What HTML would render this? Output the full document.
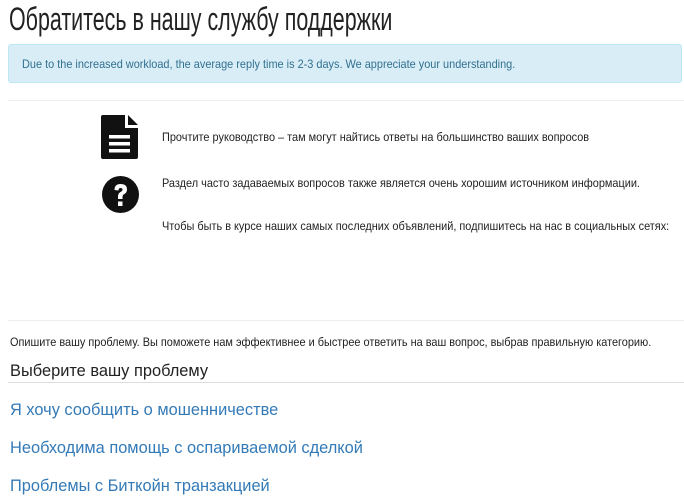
<!DOCTYPE html>
<html><head><meta charset="utf-8"><style>
body{margin:0;width:684px;height:500px;overflow:hidden;background:#fff;font-family:"Liberation Sans",sans-serif;color:#333;position:relative}
.a{position:absolute;white-space:nowrap;transform-origin:0 0}
</style></head><body>
<div class="a" style="left:9px;top:1px;font-size:32px;color:#222;transform:scaleX(0.67)">Обратитесь в нашу службу поддержки</div>
<div class="a" style="left:8px;top:44px;width:674px;height:39px;background:#d9edf7;border:1px solid #bce8f1;border-radius:3px;box-sizing:border-box"></div>
<div class="a" style="left:22px;top:57px;font-size:12px;color:#31708f;transform:scaleX(0.91)">Due to the increased workload, the average reply time is 2-3 days. We appreciate your understanding.</div>
<div class="a" style="left:8px;top:100px;width:676px;height:1px;background:#eee"></div>
<svg class="a" style="left:101px;top:115px" width="38" height="44" viewBox="0 0 38 44"><path d="M2 0H24V13H37V42Q37 44 35 44H2Q0 44 0 42V2Q0 0 2 0Z" fill="#111"/><path d="M27 0L37 10H27Z" fill="#111"/><rect x="8" y="20" width="21" height="3.5" fill="#fff"/><rect x="8" y="27" width="21" height="3.5" fill="#fff"/><rect x="8" y="34" width="21" height="3.5" fill="#fff"/></svg>
<svg class="a" style="left:102px;top:176px" width="37" height="37" viewBox="0 0 37 37"><circle cx="18.5" cy="18.5" r="18.5" fill="#111"/><path d="M12.5 14Q12.5 8 18.5 8Q25 8 25 13.5Q25 17 21.5 18.5Q20.5 19.2 20.5 21V23H16V20.5Q16 17 19 15.7Q20.5 15 20.5 13.5Q20.5 12 18.5 12Q16.5 12 16.5 14.5Z" fill="#fff"/><rect x="16" y="25.5" width="4.5" height="4.5" fill="#fff"/></svg>
<div class="a" style="left:162px;top:130px;font-size:12px;color:#222;transform:scaleX(0.91)">Прочтите руководство – там могут найтись ответы на большинство ваших вопросов</div>
<div class="a" style="left:162px;top:176px;font-size:12px;color:#222;transform:scaleX(0.91)">Раздел часто задаваемых вопросов также является очень хорошим источником информации.</div>
<div class="a" style="left:162px;top:219px;font-size:12px;color:#222;transform:scaleX(0.91)">Чтобы быть в курсе наших самых последних объявлений, подпишитесь на нас в социальных сетях:</div>
<div class="a" style="left:8px;top:320px;width:676px;height:1px;background:#eee"></div>
<div class="a" style="left:10px;top:335px;font-size:12px;color:#222;transform:scaleX(0.91)">Опишите вашу проблему. Вы поможете нам эффективнее и быстрее ответить на ваш вопрос, выбрав правильную категорию.</div>
<div class="a" style="left:10px;top:361px;font-size:17px;color:#222;transform:scaleX(0.965)">Выберите вашу проблему</div>
<div class="a" style="left:8px;top:382px;width:676px;height:1px;background:#ddd"></div>
<div class="a" style="left:10px;top:400px;font-size:17px;color:#337ab7;transform:scaleX(0.964)">Я хочу сообщить о мошенничестве</div>
<div class="a" style="left:10px;top:438px;font-size:17px;color:#337ab7;transform:scaleX(0.964)">Необходима помощь с оспариваемой сделкой</div>
<div class="a" style="left:10px;top:476px;font-size:17px;color:#337ab7;transform:scaleX(0.964)">Проблемы с Биткойн транзакцией</div>
</body></html>
